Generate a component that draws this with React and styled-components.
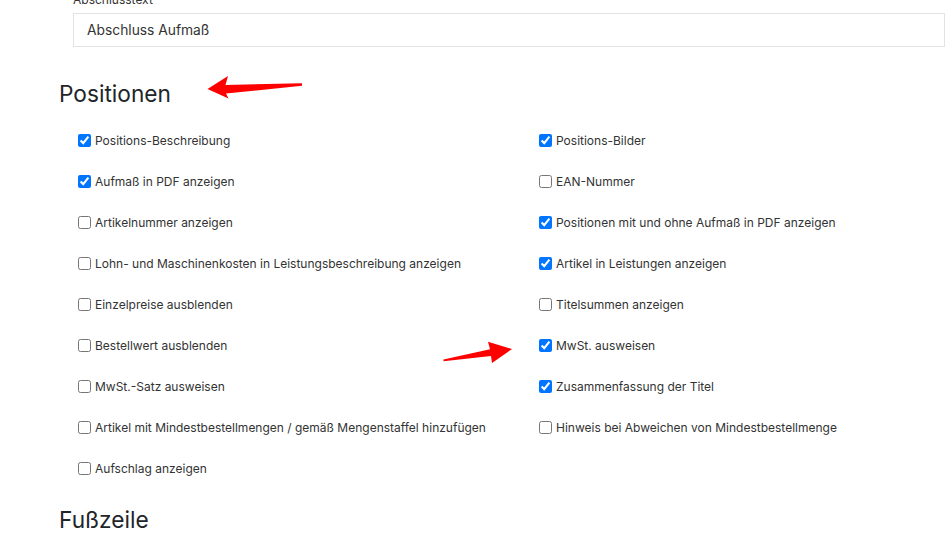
import styled, { createGlobalStyle } from "styled-components";

const GlobalStyle = createGlobalStyle`
  html, body {
    margin: 0;
    padding: 0;
    background: #ffffff;
    overflow: hidden;
  }
  body {
    font-family: Inter, "Noto Sans", "Liberation Sans", sans-serif;
    color: #212529;
  }
`;

const Screen = styled.div`
  position: relative;
  width: 946px;
  height: 541px;
  overflow: hidden;
`;

const Page = styled.div`
  margin-top: -9px;
  padding-left: 59px;
  padding-right: 1px;
`;

const Field = styled.div`
  display: flex;
  flex-direction: column;
  gap: 4px;
  padding-left: 14px;
`;

const FieldLabel = styled.label`
  font-size: 12px;
  line-height: 18px;
  color: #333;
`;

const TextInput = styled.input`
  box-sizing: border-box;
  height: 34px;
  width: 100%;
  border: 1px solid #e3e3e3;
  border-radius: 0;
  padding: 0 13px;
  font-family: inherit;
  font-size: 13.8px;
  color: #333;
  outline: none;
  background: #fff;
`;

const SectionTitle = styled.h2`
  margin: ${(p) => p.$top}px 0 0 0;
  font-size: 22.7px;
  line-height: 29px;
  font-weight: 400;
  color: #212529;
`;

const OptionGrid = styled.div`
  display: grid;
  grid-template-columns: 461px 1fr;
  grid-auto-rows: 41px;
  margin: 12px 0 0 14px;
`;

const Option = styled.label`
  display: flex;
  align-items: center;
  gap: 4px;
  padding-left: 5px;
  font-size: 12px;
  color: #333;
  grid-column: ${(p) => p.$col};
`;

const Check = styled.input`
  margin: 0;
  width: 13px;
  height: 13px;
  flex: none;
`;

const Overlay = styled.svg`
  position: absolute;
  left: 0;
  top: 0;
  pointer-events: none;
`;

const left = [
  ["Positions-Beschreibung", true],
  ["Aufmaß in PDF anzeigen", true],
  ["Artikelnummer anzeigen", false],
  ["Lohn- und Maschinenkosten in Leistungsbeschreibung anzeigen", false],
  ["Einzelpreise ausblenden", false],
  ["Bestellwert ausblenden", false],
  ["MwSt.-Satz ausweisen", false],
  ["Artikel mit Mindestbestellmengen / gemäß Mengenstaffel hinzufügen", false],
  ["Aufschlag anzeigen", false],
];

const right = [
  ["Positions-Bilder", true],
  ["EAN-Nummer", false],
  ["Positionen mit und ohne Aufmaß in PDF anzeigen", true],
  ["Artikel in Leistungen anzeigen", true],
  ["Titelsummen anzeigen", false],
  ["MwSt. ausweisen", true],
  ["Zusammenfassung der Titel", true],
  ["Hinweis bei Abweichen von Mindestbestellmenge", false],
];

export default function App() {
  const cells = [];
  for (let i = 0; i < left.length; i++) {
    cells.push(
      <Option key={"l" + i} $col={1}>
        <Check type="checkbox" defaultChecked={left[i][1]} />
        {left[i][0]}
      </Option>
    );
    if (right[i]) {
      cells.push(
        <Option key={"r" + i} $col={2}>
          <Check type="checkbox" defaultChecked={right[i][1]} />
          {right[i][0]}
        </Option>
      );
    }
  }

  return (
    <Screen>
      <GlobalStyle />
      <Page>
        <Field>
          <FieldLabel>Abschlusstext</FieldLabel>
          <TextInput defaultValue="Abschluss Aufmaß" />
        </Field>
        <SectionTitle $top={32}>Positionen</SectionTitle>
        <OptionGrid>{cells}</OptionGrid>
        <SectionTitle $top={16}>Fußzeile</SectionTitle>
      </Page>
      <Overlay width="946" height="541" viewBox="0 0 946 541">
        <polygon
          fill="#ff0000"
          points="207.5,89 228,76 225.5,85 302,83.3 302,85.8 226,93.5 228.5,98.5"
        />
        <polygon
          fill="#ff0000"
          points="443.5,359.5 490,349.3 488,341.7 512,349 492,363 491,356 443.5,361.3"
        />
      </Overlay>
    </Screen>
  );
}
